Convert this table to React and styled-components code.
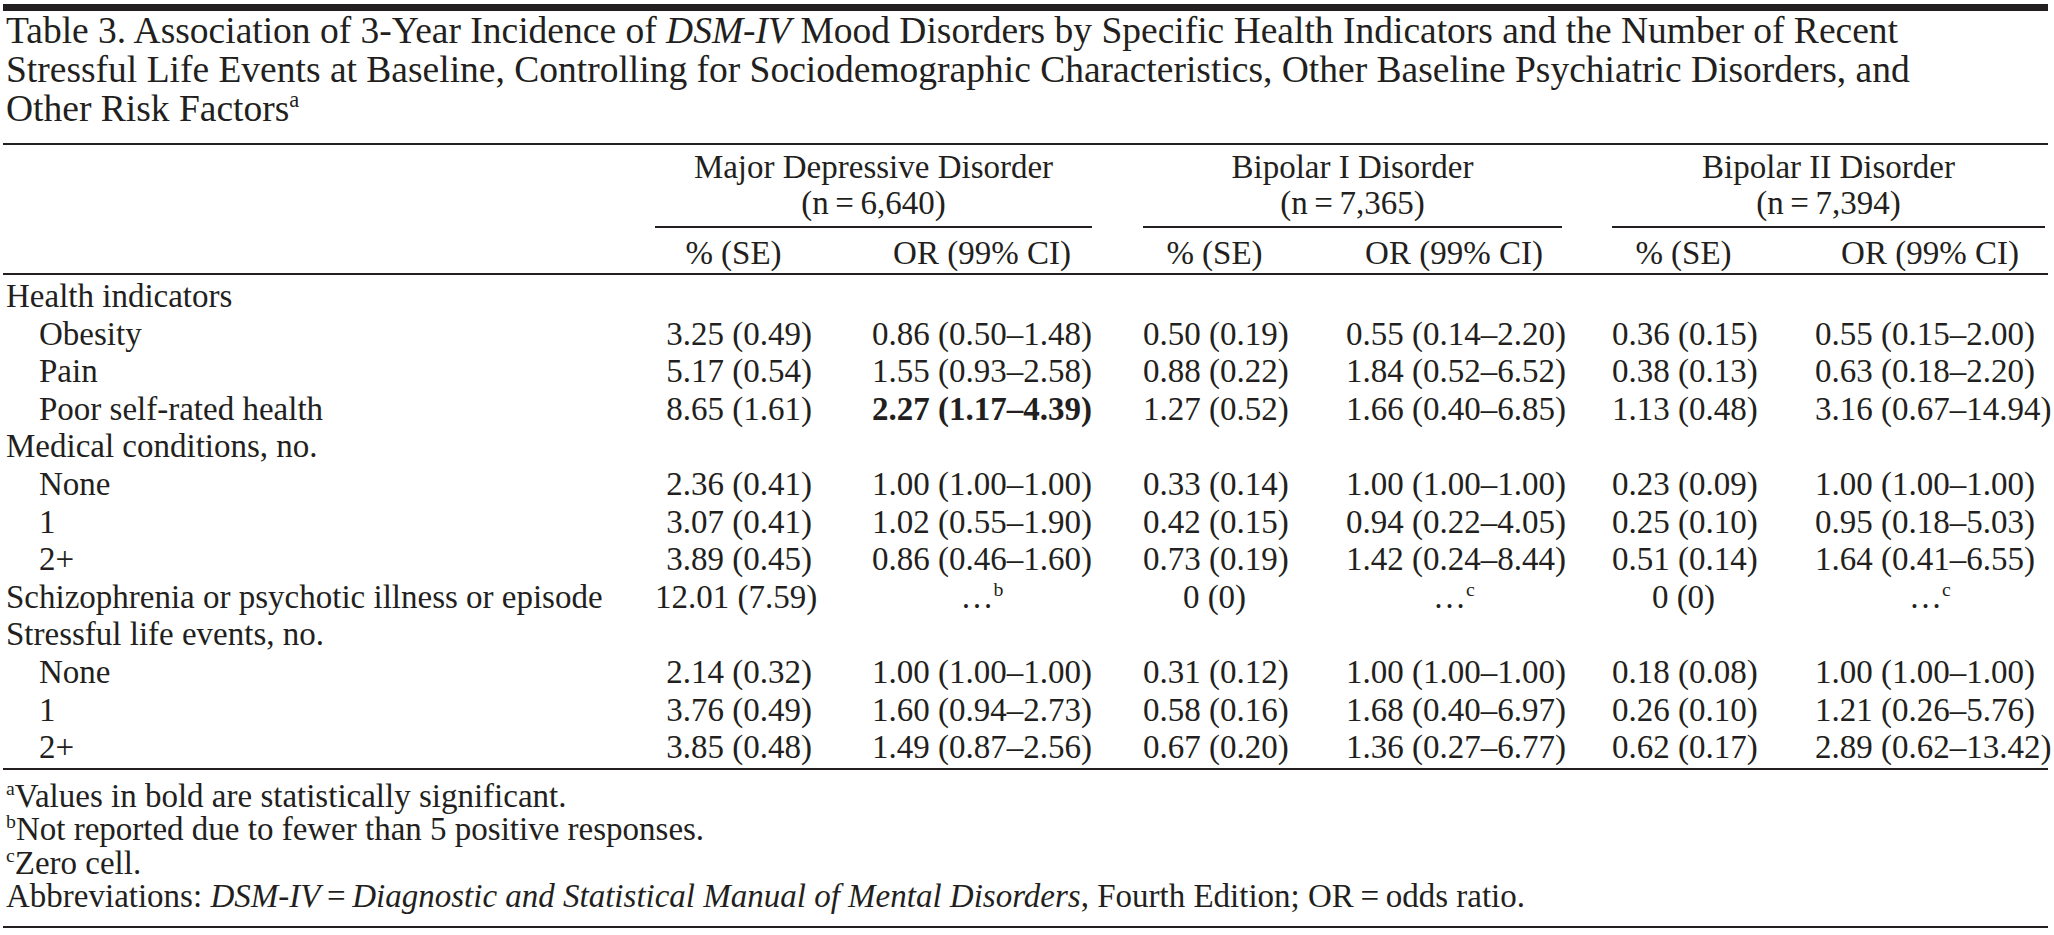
import React from 'react';
import styled, { createGlobalStyle } from 'styled-components';

const GlobalStyle = createGlobalStyle`
  body {
    margin: 0;
    background: #fff;
  }
`;

const COLUMNS = '649px 157px 280px 51px 143px 276px 50px 143px 290px';

const Page = styled.div`
  width: 2054px;
  box-sizing: border-box;
  padding: 4px 6px 0 3px;
  font-family: "Liberation Serif", "Times New Roman", serif;
  color: #231f20;
`;

const TopBar = styled.div`
  height: 7px;
  background: #231f20;
`;

const Title = styled.h1`
  margin: 0 0 15px;
  padding-left: 3px;
  font-size: 37.5px;
  line-height: 39px;
  font-weight: 400;
  white-space: nowrap;
`;

const Rule = styled.div`
  height: 2px;
  background: #231f20;
`;

const Grid = styled.div`
  display: grid;
  grid-template-columns: ${COLUMNS};
  padding-left: 3px;
  font-size: 33px;
`;

const HeadGrid = styled(Grid)`
  padding-top: 4px;
  line-height: 36px;
`;

const GroupHead = styled.div`
  grid-column: ${p => p.$span};
  grid-row: 1;
  text-align: center;
  padding-bottom: 5px;
  border-bottom: 2px solid #231f20;
`;

const SubHead = styled.div`
  grid-column: ${p => p.$col};
  grid-row: 2;
  text-align: center;
  padding: 7px 0 2px ${p => (p.$or ? '60px' : '0')};
  white-space: nowrap;
`;

const Body = styled(Grid)`
  padding-top: 3px;
  padding-bottom: 1px;
  line-height: 37.6px;
`;

const Label = styled.div`
  grid-column: 1;
  padding-left: ${p => (p.$indent ? '33px' : '0')};
  white-space: nowrap;
`;

const Cell = styled.div`
  grid-column: ${p => p.$col};
  text-align: ${p => (p.$center ? 'center' : p.$or ? 'left' : 'right')};
  padding-left: ${p => (p.$or ? '60px' : '0')};
  font-weight: ${p => (p.$bold ? 700 : 400)};
  white-space: nowrap;
`;

const Sup = styled.sup`
  font-size: 0.6em;
  line-height: 0;
  vertical-align: 0.62em;
`;

const Notes = styled.div`
  padding: 10px 0 12px 3px;
  font-size: 33px;
  line-height: 33.5px;
`;

const Note = styled.p`
  margin: 0;
  white-space: nowrap;
`;

const groups = [
  { name: 'Major Depressive Disorder', n: '6,640', span: '2 / 4', pct: 2, or: 3 },
  { name: 'Bipolar I Disorder', n: '7,365', span: '5 / 7', pct: 5, or: 6 },
  { name: 'Bipolar II Disorder', n: '7,394', span: '8 / 10', pct: 8, or: 9 },
];

const VALUE_COLS = [2, 3, 5, 6, 8, 9];

const none = { text: '0 (0)', center: true };
const missing = sup => ({ text: '…', sup, center: true });

const rows = [
  { label: 'Health indicators' },
  { label: 'Obesity', indent: true, values: ['3.25 (0.49)', '0.86 (0.50–1.48)', '0.50 (0.19)', '0.55 (0.14–2.20)', '0.36 (0.15)', '0.55 (0.15–2.00)'] },
  { label: 'Pain', indent: true, values: ['5.17 (0.54)', '1.55 (0.93–2.58)', '0.88 (0.22)', '1.84 (0.52–6.52)', '0.38 (0.13)', '0.63 (0.18–2.20)'] },
  { label: 'Poor self-rated health', indent: true, values: ['8.65 (1.61)', { text: '2.27 (1.17–4.39)', bold: true }, '1.27 (0.52)', '1.66 (0.40–6.85)', '1.13 (0.48)', '3.16 (0.67–14.94)'] },
  { label: 'Medical conditions, no.' },
  { label: 'None', indent: true, values: ['2.36 (0.41)', '1.00 (1.00–1.00)', '0.33 (0.14)', '1.00 (1.00–1.00)', '0.23 (0.09)', '1.00 (1.00–1.00)'] },
  { label: '1', indent: true, values: ['3.07 (0.41)', '1.02 (0.55–1.90)', '0.42 (0.15)', '0.94 (0.22–4.05)', '0.25 (0.10)', '0.95 (0.18–5.03)'] },
  { label: '2+', indent: true, values: ['3.89 (0.45)', '0.86 (0.46–1.60)', '0.73 (0.19)', '1.42 (0.24–8.44)', '0.51 (0.14)', '1.64 (0.41–6.55)'] },
  { label: 'Schizophrenia or psychotic illness or episode', values: ['12.01 (7.59)', missing('b'), none, missing('c'), none, missing('c')] },
  { label: 'Stressful life events, no.' },
  { label: 'None', indent: true, values: ['2.14 (0.32)', '1.00 (1.00–1.00)', '0.31 (0.12)', '1.00 (1.00–1.00)', '0.18 (0.08)', '1.00 (1.00–1.00)'] },
  { label: '1', indent: true, values: ['3.76 (0.49)', '1.60 (0.94–2.73)', '0.58 (0.16)', '1.68 (0.40–6.97)', '0.26 (0.10)', '1.21 (0.26–5.76)'] },
  { label: '2+', indent: true, values: ['3.85 (0.48)', '1.49 (0.87–2.56)', '0.67 (0.20)', '1.36 (0.27–6.77)', '0.62 (0.17)', '2.89 (0.62–13.42)'] },
];

const ValueCell = ({ value, index }) => {
  const v = typeof value === 'string' ? { text: value } : value;
  return (
    <Cell $col={VALUE_COLS[index]} $or={index % 2 === 1} $center={v.center} $bold={v.bold}>
      {v.text}
      {v.sup && <Sup>{v.sup}</Sup>}
    </Cell>
  );
};

const App = () => (
  <Page>
    <GlobalStyle />
    <TopBar />
    <Title>
      Table 3. Association of 3-Year Incidence of <i>DSM-IV</i> Mood Disorders by Specific Health Indicators and the Number of Recent
      <br />
      Stressful Life Events at Baseline, Controlling for Sociodemographic Characteristics, Other Baseline Psychiatric Disorders, and
      <br />
      Other Risk Factors<Sup>a</Sup>
    </Title>
    <Rule />
    <HeadGrid>
      {groups.map(g => (
        <GroupHead key={g.name} $span={g.span}>
          {g.name}
          <br />
          (n{'\u2009'}={'\u2009'}{g.n})
        </GroupHead>
      ))}
      {groups.map(g => (
        <React.Fragment key={g.name}>
          <SubHead $col={g.pct}>% (SE)</SubHead>
          <SubHead $col={g.or} $or>OR (99% CI)</SubHead>
        </React.Fragment>
      ))}
    </HeadGrid>
    <Rule />
    <Body>
      {rows.map((r, i) => (
        <React.Fragment key={i}>
          <Label $indent={r.indent}>{r.label}</Label>
          {r.values && r.values.map((v, j) => <ValueCell key={j} value={v} index={j} />)}
        </React.Fragment>
      ))}
    </Body>
    <Rule />
    <Notes>
      <Note><Sup>a</Sup>Values in bold are statistically significant.</Note>
      <Note><Sup>b</Sup>Not reported due to fewer than 5 positive responses.</Note>
      <Note><Sup>c</Sup>Zero cell.</Note>
      <Note>
        Abbreviations: <i>DSM-IV</i>{'\u2009'}={'\u2009'}<i>Diagnostic and Statistical Manual of Mental Disorders</i>, Fourth Edition;
        OR{'\u2009'}={'\u2009'}odds ratio.
      </Note>
    </Notes>
    <Rule />
  </Page>
);

export default App;
